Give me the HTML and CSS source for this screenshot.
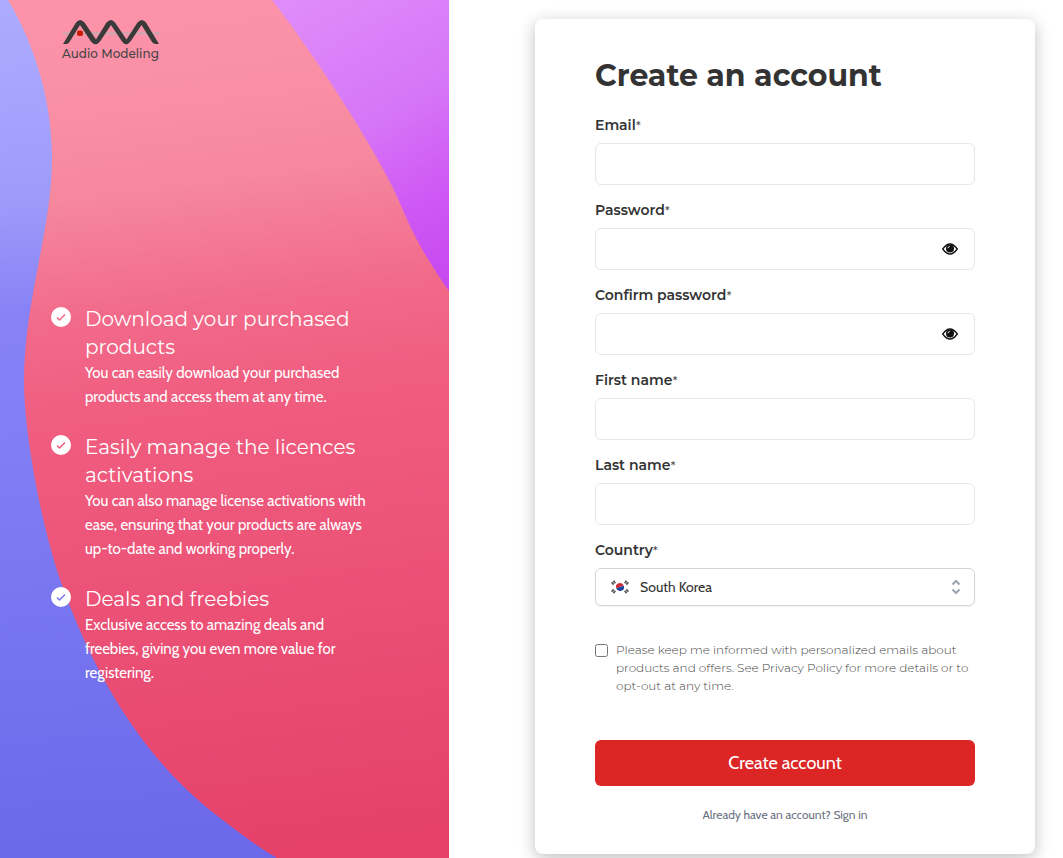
FILE: index.html
```
<!DOCTYPE html>
<html lang="en">
<head>
    <meta charset="UTF-8">
    <meta name="viewport" content="width=device-width, initial-scale=1.0">
    <title>Create an account - Audio Modeling</title>
    <link rel="stylesheet" href="styles.css">
</head>
<body>
    <div class="page">
        <aside class="side">
            <svg class="side-bg" viewBox="0 0 449 858" preserveAspectRatio="none" aria-hidden="true">
                <defs>
                    <linearGradient id="blue" gradientUnits="userSpaceOnUse" x1="0" y1="0" x2="60" y2="858">
                        <stop offset="0" stop-color="#adabff"/>
                        <stop offset=".23" stop-color="#9e9cfa"/>
                        <stop offset=".36" stop-color="#8783f6"/>
                        <stop offset=".5" stop-color="#827ef5"/>
                        <stop offset="1" stop-color="#6b69ea"/>
                    </linearGradient>
                    <linearGradient id="red" gradientUnits="userSpaceOnUse" x1="130" y1="0" x2="240" y2="858">
                        <stop offset="0" stop-color="#fc93a9"/>
                        <stop offset=".1" stop-color="#fa90a7"/>
                        <stop offset=".22" stop-color="#f5879e"/>
                        <stop offset=".36" stop-color="#f26a8a"/>
                        <stop offset=".46" stop-color="#f05e80"/>
                        <stop offset="1" stop-color="#e54169"/>
                    </linearGradient>
                    <linearGradient id="purple" gradientUnits="userSpaceOnUse" x1="300" y1="0" x2="450" y2="270">
                        <stop offset="0" stop-color="#df8bfa"/>
                        <stop offset=".45" stop-color="#d676f7"/>
                        <stop offset=".75" stop-color="#cf59f4"/>
                        <stop offset="1" stop-color="#c74af0"/>
                    </linearGradient>
                </defs>
                <rect width="449" height="858" fill="url(#red)"/>
                <path fill="url(#blue)" d="M0 0H8C36 47 52 103 52 158C52 230 24 300 24 382C24 432 42 530 62 585C102 697 155 764 205 806C230 826 253 844 277 858H0Z"/>
                <path fill="url(#purple)" d="M272 0C320 62 372 145 392 186C406 214 411 237 449 291V0Z"/>
            </svg>

            <a href="#" class="logo">
                <svg viewBox="0 0 98 28" aria-hidden="true">
                    <path d="M1 15.500H98" stroke="#c8a9b0" stroke-width="2"/>
                    <path d="M1 26H5Q6.500 25.500 7.500 24L18 7L29 23.500Q33.500 29 38 23.500L49 7L60 23.500Q64 29 68.500 23.500L79.500 7L90 24Q91.500 26 94 26H97L84 4.500Q80 -.500 75.500 4.500L64.500 21.500L53 4.500Q49 -.500 44.500 4.500L34 21.500L22.500 4.500Q18 -.500 14 4.500Z" fill="#3a3a3a"/>
                    <rect x="15" y="12.500" width="6" height="5.500" rx="2" fill="#cc1b00"/>
                </svg>
                <span>Audio Modeling</span>
            </a>

            <ul class="benefits">
                <li>
                    <svg viewBox="0 0 20 20" aria-hidden="true"><circle cx="10" cy="10" r="10" fill="#fff"/><path d="M6 10.500L8.500 13L14 7.500" fill="none" stroke="#f06586" stroke-width="1.500"/></svg>
                    <div>
                        <h2>Download your purchased products</h2>
                        <p>You can easily download your purchased products and access them at any time.</p>
                    </div>
                </li>
                <li>
                    <svg viewBox="0 0 20 20" aria-hidden="true"><circle cx="10" cy="10" r="10" fill="#fff"/><path d="M6 10.500L8.500 13L14 7.500" fill="none" stroke="#ee587b" stroke-width="1.500"/></svg>
                    <div>
                        <h2>Easily manage the licences activations</h2>
                        <p>You can also manage license activations with ease, ensuring that your products are always up-to-date and working properly.</p>
                    </div>
                </li>
                <li>
                    <svg viewBox="0 0 20 20" aria-hidden="true"><circle cx="10" cy="10" r="10" fill="#fff"/><path d="M6 10.500L8.500 13L14 7.500" fill="none" stroke="#7b75ef" stroke-width="1.500"/></svg>
                    <div>
                        <h2>Deals and freebies</h2>
                        <p>Exclusive access to amazing deals and freebies, giving you even more value for registering.</p>
                    </div>
                </li>
            </ul>
        </aside>

        <main class="content">
            <form class="card">
                <h1>Create an account</h1>

                <div class="field">
                    <label for="email">Email<span>*</span></label>
                    <input type="email" id="email">
                </div>
                <div class="field">
                    <label for="password">Password<span>*</span></label>
                    <div class="control">
                        <input type="password" id="password">
                        <button type="button" class="eye" aria-label="Show password" onclick="toggle('password')">
                            <svg viewBox="0 0 16 12"><path d="M.7 6Q8-4 15.300 6Q8 16 .7 6Z" fill="#fff" stroke="#111" stroke-width="1.300"/><circle cx="8" cy="5.600" r="4" fill="#111"/><path d="M6 5.200Q6.200 3.500 7.800 3.300" fill="none" stroke="#fff" stroke-width=".9"/></svg>
                        </button>
                    </div>
                </div>
                <div class="field">
                    <label for="confirm">Confirm password<span>*</span></label>
                    <div class="control">
                        <input type="password" id="confirm">
                        <button type="button" class="eye" aria-label="Show password" onclick="toggle('confirm')">
                            <svg viewBox="0 0 16 12"><path d="M.7 6Q8-4 15.300 6Q8 16 .7 6Z" fill="#fff" stroke="#111" stroke-width="1.300"/><circle cx="8" cy="5.600" r="4" fill="#111"/><path d="M6 5.200Q6.200 3.500 7.800 3.300" fill="none" stroke="#fff" stroke-width=".9"/></svg>
                        </button>
                    </div>
                </div>
                <div class="field">
                    <label for="first">First name<span>*</span></label>
                    <input type="text" id="first">
                </div>
                <div class="field">
                    <label for="last">Last name<span>*</span></label>
                    <input type="text" id="last">
                </div>
                <div class="field">
                    <label for="country">Country<span>*</span></label>
                    <div class="control">
                        <svg class="flag" viewBox="0 0 18 14" aria-hidden="true">
                            <path d="M5 7A4 4 0 0 1 13 7Z" fill="#cd2e3a" transform="rotate(-20 9 7)"/>
                            <path d="M5 7A4 4 0 0 0 13 7Z" fill="#1b469c" transform="rotate(-20 9 7)"/>
                            <path d="M1 4L4 1.500M14 1.500L17 4M1 10L4 12.500M14 12.500L17 10" stroke="#555" stroke-width="3" stroke-dasharray="1.700 .5"/>
                        </svg>
                        <select id="country">
                            <option>South Korea</option>
                        </select>
                        <svg class="arrows" viewBox="0 0 10 16" aria-hidden="true"><path d="M1.500 5.500L5 2L8.500 5.500M1.500 10.500L5 14L8.500 10.500" fill="none" stroke="#9ca3af" stroke-width="2"/></svg>
                    </div>
                </div>

                <div class="consent">
                    <input type="checkbox" id="news">
                    <label for="news">Please keep me informed with personalized emails about products and offers. See Privacy Policy for more details or to opt-out at any time.</label>
                </div>

                <button type="submit" class="submit">Create account</button>
                <p class="signin">Already have an account? <a href="#">Sign in</a></p>
            </form>
        </main>
    </div>
    <script>
        const toggle = (id) => {
            const input = document.getElementById(id);
            input.type = input.type === "password" ? "text" : "password";
        }
    </script>
</body>
</html>
```
FILE: styles.css
```
*{
    margin: 0;
    padding: 0;
    box-sizing: border-box;
}
body{
    color: #333;
    background-color: #fff;
    font-family: Cabin, Lato, sans-serif;
}
.page {
    display: grid;
    grid-template-columns: 449fr 614fr;
    min-height: 100vh;
}
.side {
    position: relative;
    padding: 18px 48px 24px 51px;
    color: white;
}
.side-bg {
    position: absolute;
    inset: 0;
    width: 100%;
    height: 100%;
}
.logo {
    position: relative;
    display: block;
    width: 98px;
    margin-left: 11px;
    color: #444;
    font-family: Montserrat, "DejaVu Sans", sans-serif;
    font-size: 12px;
    font-weight: 500;
    line-height: 16px;
    text-decoration: none;
    white-space: nowrap;
}
.logo svg {
    display: block;
    width: 98px;
    height: 28px;
}
.benefits {
    position: relative;
    display: flex;
    flex-direction: column;
    gap: 24px;
    margin-top: 243px;
    list-style: none;
}
.benefits li {
    display: flex;
    gap: 14px;
}
.benefits li > svg {
    flex: none;
    width: 20px;
    height: 20px;
    margin-top: 2px;
}
.benefits h2 {
    max-width: 290px;
    font-family: Montserrat, Inter, sans-serif;
    font-size: 20px;
    font-weight: 400;
    line-height: 28px;
}
.benefits p {
    max-width: 290px;
    font-size: 15px;
    line-height: 24px;
}
.content {
    padding: 19px 28px 4px;
}
.card {
    max-width: 500px;
    margin-left: auto;
    padding: 39px 60px 30px;
    border-radius: 8px;
    background-color: white;
    box-shadow: 0 4px 16px rgba(0, 0, 0, 0.25);
}
h1 {
    margin-bottom: 21px;
    font-family: Montserrat, Inter, sans-serif;
    font-size: 30px;
    font-weight: 700;
    line-height: 36px;
}
.field {
    margin-bottom: 15px;
}
.field label {
    display: block;
    margin-bottom: 8px;
    font-family: Montserrat, Inter, sans-serif;
    font-size: 14px;
    font-weight: 600;
    line-height: 20px;
}
.field label span {
    font-family: Cabin, Lato, sans-serif;
    font-size: 12px;
    font-weight: 400;
    line-height: 1;
}
.field input, .field select {
    display: block;
    width: 100%;
    height: 42px;
    padding: 0 16px;
    border: 1px solid #e5e7eb;
    border-radius: 6px;
    background-color: white;
    color: #333;
    font-family: inherit;
    font-size: 14px;
}
.control {
    position: relative;
}
.control input {
    padding-right: 48px;
}
.field select {
    height: 38px;
    padding: 0 44px;
    border-color: #d1d5db;
    box-shadow: 0 1px 2px rgba(0, 0, 0, 0.05);
    appearance: none;
}
.eye {
    position: absolute;
    top: 13px;
    right: 16px;
    width: 18px;
    height: 16px;
    border: 0;
    background: none;
    cursor: pointer;
}
.eye svg {
    display: block;
    width: 16px;
    height: 16px;
    margin: auto;
}
.flag {
    position: absolute;
    top: 12px;
    left: 16px;
    width: 18px;
    height: 14px;
}
.arrows {
    position: absolute;
    top: 11px;
    right: 14px;
    width: 10px;
    height: 16px;
    pointer-events: none;
}
.consent {
    display: flex;
    align-items: flex-start;
    gap: 8px;
    margin-top: 35px;
    color: #444;
    font-family: Montserrat, Inter, sans-serif;
    font-size: 12px;
    font-weight: 300;
    line-height: 18px;
}
.consent input {
    flex: none;
    width: 13px;
    height: 13px;
    margin-top: 3px;
}
.submit {
    display: block;
    width: 100%;
    height: 46px;
    margin-top: 45px;
    border: 0;
    border-radius: 6px;
    background-color: #dc2626;
    color: white;
    font-family: inherit;
    font-size: 18px;
    cursor: pointer;
}
.signin {
    margin-top: 20px;
    color: #6b7280;
    font-size: 12px;
    line-height: 18px;
    text-align: center;
}
.signin a {
    color: inherit;
    text-decoration: none;
}
```
